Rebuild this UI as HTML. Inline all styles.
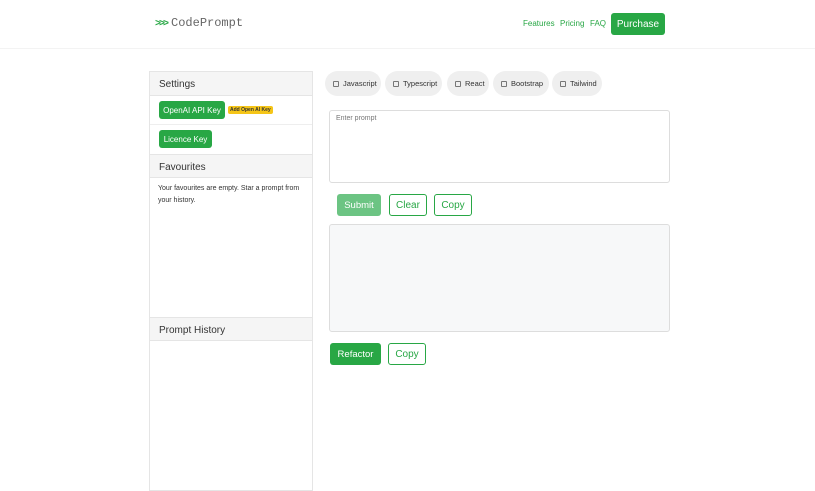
<!DOCTYPE html>
<html><head><style>
*{box-sizing:border-box;margin:0;padding:0}
body{width:815px;height:480px;overflow:hidden;background:#fff;font-family:"Liberation Sans",sans-serif;position:relative;color:#333}
.abs{position:absolute}
.hdr{left:0;top:0;width:815px;height:49px;border-bottom:1px solid #f3f3f3}
.logo{left:155px;top:16px;font-family:"Liberation Mono",monospace;font-size:12px;color:#666}
.logo b{color:#28a745;font-weight:bold;font-size:10px;letter-spacing:-2px;margin-right:4px}
.nav{top:19px;font-size:8px;color:#28a745}
.btn{position:absolute;background:#28a745;color:#fff;border-radius:3px;display:flex;align-items:center;justify-content:center;font-size:8px}
.obtn{position:absolute;border:1px solid #28a745;color:#28a745;border-radius:3px;display:flex;align-items:center;justify-content:center;font-size:10px;background:#fff}
.side{left:149px;top:71px;width:164px;height:420px;border:1px solid #e5e5e5}
.sh{position:absolute;left:0;width:162px;height:24px;background:#f5f5f5;border-bottom:1px solid #e5e5e5;font-size:10px;padding:7px 9px;color:#333}
.chip{position:absolute;top:71px;height:25px;background:#efefef;border-radius:13px;font-size:7.5px;display:flex;align-items:center;padding-left:8px;color:#333}
.chip i{display:inline-block;width:6px;height:6px;border:1px solid #777;border-radius:1px;margin-right:4px}
.ta{position:absolute;left:329px;width:341px;border:1px solid #ddd;border-radius:3px}
</style></head><body>
<div class="abs hdr"></div>
<div class="abs logo"><b>&gt;&gt;&gt;</b>CodePrompt</div>
<div class="abs nav" style="left:523px">Features</div>
<div class="abs nav" style="left:560px">Pricing</div>
<div class="abs nav" style="left:590px">FAQ</div>
<div class="btn" style="left:611px;top:13px;width:54px;height:22px;font-size:10px">Purchase</div>

<div class="abs side">
 <div class="sh" style="top:0">Settings</div>
 <div class="btn" style="left:9px;top:29px;width:66px;height:18px">OpenAI API Key</div>
 <div class="abs" style="left:78px;top:34px;background:#f5c518;font-size:5px;font-weight:bold;padding:1px 2px;border-radius:2px;color:#333">Add Open AI Key</div>
 <div class="abs" style="left:0;top:52px;width:162px;border-top:1px solid #eee"></div>
 <div class="btn" style="left:9px;top:58px;width:53px;height:18px">Licence Key</div>
 <div class="sh" style="top:82px;border-top:1px solid #e5e5e5">Favourites</div>
 <div class="abs" style="left:8px;top:111px;font-size:7px;line-height:12px;width:150px">Your favourites are empty. Star a prompt from your history.</div>
 <div class="sh" style="top:245px;border-top:1px solid #e5e5e5">Prompt History</div>
</div>

<div class="chip" style="left:325px;width:56px"><i></i>Javascript</div>
<div class="chip" style="left:385px;width:57px"><i></i>Typescript</div>
<div class="chip" style="left:447px;width:42px"><i></i>React</div>
<div class="chip" style="left:493px;width:56px"><i></i>Bootstrap</div>
<div class="chip" style="left:552px;width:50px"><i></i>Tailwind</div>

<div class="ta" style="top:110px;height:73px"><span style="position:absolute;left:6px;top:4px;font-size:7px;color:#777">Enter prompt</span></div>
<div class="btn" style="left:337px;top:194px;width:44px;height:22px;background:#6cc483;font-size:9.5px">Submit</div>
<div class="obtn" style="left:389px;top:194px;width:38px;height:22px">Clear</div>
<div class="obtn" style="left:434px;top:194px;width:38px;height:22px">Copy</div>
<div class="ta" style="top:224px;height:108px;background:#f7f8f9"></div>
<div class="btn" style="left:330px;top:343px;width:51px;height:22px;font-size:9.5px">Refactor</div>
<div class="obtn" style="left:388px;top:343px;width:38px;height:22px">Copy</div>
</body></html>
